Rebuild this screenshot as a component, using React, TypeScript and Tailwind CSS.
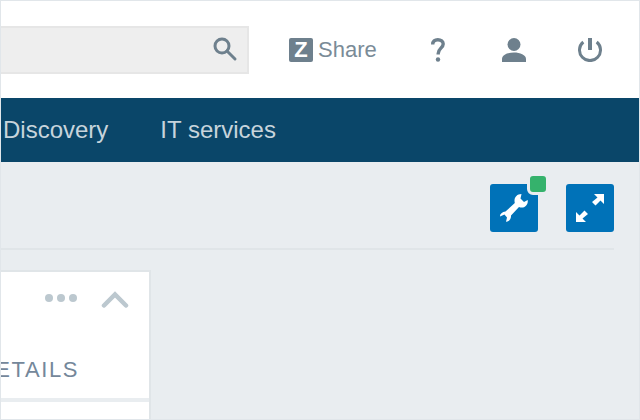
export default function App() {
  return (
    <div className="w-[640px] h-[420px] overflow-hidden flex flex-col bg-[#e9edf0] border border-[#e1e6ea] font-['Liberation_Sans',Arial,sans-serif]">
      {/* Top bar */}
      <header className="h-[97px] shrink-0 bg-white flex items-center">
        <div className="w-[248px] h-[48px] shrink-0 bg-[#eeeeee] border-2 border-l-0 border-[#e6e6e6] flex items-center justify-end pr-[9px]">
          <svg width="26" height="26" viewBox="0 0 26 26" fill="none" stroke="#6e808d" strokeWidth="3" className="-translate-y-[1px]">
            <circle cx="10" cy="10" r="7" />
            <path d="M15 15 L23 23" strokeLinecap="round" />
          </svg>
        </div>
        <div className="ml-[40px] flex items-center">
          <span className="w-[24px] h-[24px] rounded-[2px] bg-[#6e808d] text-white text-[22px] font-bold flex items-center justify-center leading-none">
            Z
          </span>
          <span className="ml-[5px] text-[22px] text-[#7a8b97] leading-none">Share</span>
        </div>
        <svg className="ml-[54px]" width="14" height="24" viewBox="0 0 14 24" fill="none" stroke="#6e808d" strokeWidth="3.4">
          <path d="M1.7 6.5 C1.7 3.2 3.8 1.7 6.8 1.7 C10 1.7 12.2 3.4 12.2 6 C12.2 10 7.2 10.5 7.2 15.5 V16.5" />
          <circle cx="7" cy="21.5" r="2.2" fill="#6e808d" stroke="none" />
        </svg>
        <svg className="ml-[56px]" width="26" height="24" viewBox="0 0 26 24" fill="#6e808d">
          <circle cx="13" cy="6.5" r="6.5" />
          <path d="M1 24 V21 C1 17 7 14.5 13 14.5 C19 14.5 25 17 25 21 V24 Z" />
        </svg>
        <svg className="ml-[51px]" width="24" height="24" viewBox="0 0 24 24" fill="none" stroke="#6e808d" strokeWidth="3">
          <path d="M5.3 4 A10.5 10.5 0 1 0 18.7 4" />
          <path d="M12 0 V12" strokeWidth="4" />
        </svg>
      </header>

      {/* Nav */}
      <nav className="h-[64px] shrink-0 bg-[#0a4669] flex items-center pl-[2px] gap-[52px] text-[24px] text-[#c7d4dc]">
        <span>Discovery</span>
        <span>IT services</span>
      </nav>

      {/* Content */}
      <main className="flex-1 min-h-0 flex flex-col">
        <div className="mr-[25px] h-[88px] shrink-0 border-b-2 border-[#e0e5e8] flex justify-end items-start pt-[22px] gap-[28px]">
          <button className="relative w-[48px] h-[48px] rounded-[3px] bg-[#0072b8] flex items-center justify-center">
            <svg width="30" height="30" viewBox="0 0 30 30" fill="white">
              <path d="M22.5 1 C17.5 1 14.5 5 15.8 10 L6.5 18.5 C3 19 0.8 21 1 23.5 L5.5 21.5 L8 24.5 L7 28.7 C10 29 12.2 26 12 22.5 L20 14 C25 16 29.5 12 28.7 7 L25 9 L21.5 5.5 Z" />
            </svg>
            <span className="absolute -top-[11px] -right-[11px] w-[16px] h-[16px] rounded-[6px] bg-[#35b26c] border-[3px] border-[#e9edf0] box-content" />
          </button>
          <button className="w-[48px] h-[48px] rounded-[3px] bg-[#0072b8] flex items-center justify-center">
            <svg width="30" height="30" viewBox="0 0 30 30" fill="white">
              <path d="M19 1 H29 V11 L25.5 7.5 L20.5 12.5 L17 9 L22.5 4.5 Z" />
              <path d="M11 29 H1 V19 L4.5 22.5 L9.5 17.5 L13 21 L7.5 25.5 Z" />
            </svg>
          </button>
        </div>

        <section className="mt-[20px] w-[150px] flex-1 flex flex-col border-t-2 border-r-2 border-[#e0e5e8] bg-white">
          <div className="h-[126px] shrink-0 relative">
            <div className="absolute top-[22px] left-[44px] flex gap-[4px]">
              <span className="w-[8px] h-[8px] rounded-full bg-[#bcc8cf]" />
              <span className="w-[8px] h-[8px] rounded-full bg-[#bcc8cf]" />
              <span className="w-[8px] h-[8px] rounded-full bg-[#bcc8cf]" />
            </div>
            <svg className="absolute top-[19px] left-[100px]" width="28" height="18" viewBox="0 0 28 18" fill="none" stroke="#bcc8cf" strokeWidth="4.5" strokeLinecap="round">
              <path d="M3 14.5 L14 3.5 L25 14.5" />
            </svg>
            <span className="absolute right-[70px] bottom-[17px] text-[22px] tracking-[1.6px] text-[#74879a] whitespace-nowrap leading-none">
              DETAILS
            </span>
          </div>
          <div className="h-[4px] bg-[#e9edf0] shrink-0" />
        </section>
      </main>
    </div>
  );
}
